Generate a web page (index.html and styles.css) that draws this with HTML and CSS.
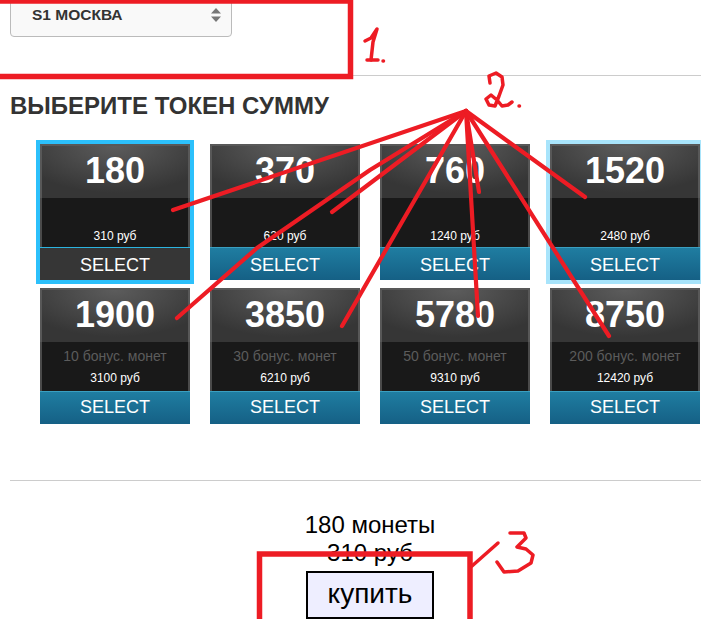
FILE: index.html
```html
<!DOCTYPE html>
<html lang="ru">
<head>
<meta charset="utf-8">
<title>Выберите токен сумму</title>
<link rel="stylesheet" href="styles.css">
</head>
<body>
<main class="page">
  <div class="server">
    <select class="server-select"><option>S1 МОСКВА</option></select>
    <svg class="server-arrows" width="10" height="14" viewBox="0 0 10 14"><path d="M5 0 10 5.500H0Z M0 8.500H10L5 14Z"/></svg>
  </div>
  <hr class="rule rule-top">
  <h2 class="title">ВЫБЕРИТЕ ТОКЕН СУММУ</h2>
  <div class="tokens">
    <article class="token token-plain token-active">
      <div class="token-amount">180</div>
      <div class="token-info"><div class="token-bonus"></div><div class="token-price">310 руб</div></div>
      <div class="token-select">SELECT</div>
    </article>
    <article class="token token-plain">
      <div class="token-amount">370</div>
      <div class="token-info"><div class="token-bonus"></div><div class="token-price">620 руб</div></div>
      <div class="token-select">SELECT</div>
    </article>
    <article class="token token-plain">
      <div class="token-amount">760</div>
      <div class="token-info"><div class="token-bonus"></div><div class="token-price">1240 руб</div></div>
      <div class="token-select">SELECT</div>
    </article>
    <article class="token token-plain token-hover">
      <div class="token-amount">1520</div>
      <div class="token-info"><div class="token-bonus"></div><div class="token-price">2480 руб</div></div>
      <div class="token-select">SELECT</div>
    </article>
    <article class="token">
      <div class="token-amount">1900</div>
      <div class="token-info"><div class="token-bonus">10 бонус. монет</div><div class="token-price">3100 руб</div></div>
      <div class="token-select">SELECT</div>
    </article>
    <article class="token">
      <div class="token-amount">3850</div>
      <div class="token-info"><div class="token-bonus">30 бонус. монет</div><div class="token-price">6210 руб</div></div>
      <div class="token-select">SELECT</div>
    </article>
    <article class="token">
      <div class="token-amount">5780</div>
      <div class="token-info"><div class="token-bonus">50 бонус. монет</div><div class="token-price">9310 руб</div></div>
      <div class="token-select">SELECT</div>
    </article>
    <article class="token">
      <div class="token-amount">8750</div>
      <div class="token-info"><div class="token-bonus">200 бонус. монет</div><div class="token-price">12420 руб</div></div>
      <div class="token-select">SELECT</div>
    </article>
  </div>
  <hr class="rule rule-bottom">
  <div class="summary">
    <div class="summary-line">180 монеты</div>
    <div class="summary-line">310 руб</div>
    <button class="buy">купить</button>
  </div>
</main>
<svg class="marks" width="701" height="619" viewBox="0 0 701 619" aria-hidden="true">
  <g class="marks-box">
    <path d="M-5 1H350.500V76.500H-5"/>
    <path d="M259.500 625V554H470V625"/>
  </g>
  <g class="marks-rays">
    <path d="M466 111 173 210"/>
    <path d="M466 111 332 212"/>
    <path d="M466 111 479 192"/>
    <path d="M466 111 585 197"/>
    <path d="M466 111 370 170 257 248 177 318"/>
    <path d="M466 111 342 326"/>
    <path d="M466 111 478 316"/>
    <path d="M466 111 609 336"/>
  </g>
  <g class="marks-hand">
    <path d="M365 41 371 38 377 29 373 42 371 60"/>
    <path d="M367 60H378"/>
    <path d="M383 61H383.500"/>
    <path d="M490 83 489 76 496 73 502 77 503 85 499 96 495 106 489 105 486 99 491 95 497 100 502 106 508 105 512 102"/>
    <path d="M519 106H519.500"/>
    <path d="M472 566 498 543"/>
    <path d="M510 533H524L526 538 517 547 526 549 533 555 531 563 518 571 504 572 497 562"/>
  </g>
</svg>
</body>
</html>
```

FILE: styles.css
```css
html, body {
  margin: 0;
  height: 619px;
  overflow: hidden;
  background: #fff;
}

body {
  position: relative;
  font-family: "Liberation Sans", Arial, sans-serif;
  color: #333;
}

.page {
  padding-left: 10px;
  margin-top: -7px;
}

.server {
  position: relative;
  width: 222px;
  height: 44px;
}

.server-select {
  display: block;
  width: 100%;
  height: 100%;
  box-sizing: border-box;
  appearance: none;
  border: 1px solid #bbb;
  border-radius: 4px;
  background: #f9f9f9;
  padding: 0 0 2px 21px;
  font: bold 15.500px "Liberation Sans", Arial, sans-serif;
  color: #333;
}

.server-arrows {
  position: absolute;
  right: 11px;
  top: 15px;
  fill: #777;
}

.rule {
  border: 0;
  border-top: 1px solid #ccc;
  margin: 0;
}

.rule-top {
  margin-top: 38px;
}

.title {
  margin: 17px 0 0;
  font-size: 24px;
  line-height: 26px;
  font-weight: bold;
  color: #333;
}

.tokens {
  display: grid;
  grid-template-columns: repeat(4, 150px);
  gap: 8px 20px;
  padding-left: 30px;
  margin-top: 25px;
}

.token {
  display: flex;
  flex-direction: column;
  height: 136px;
  color: #fff;
  text-align: center;
}

.token-active {
  outline: 4px solid #2cc0fb;
}

.token-hover {
  outline: 4px solid #a8e4fb;
}

.token-amount {
  box-sizing: border-box;
  height: 54px;
  border: 2px solid #585858;
  border-bottom: 0;
  background: radial-gradient(ellipse 70% 90% at 50% 0, #5c5c5c, #363636);
  font-size: 36px;
  font-weight: bold;
  line-height: 49px;
}

.token-info {
  box-sizing: border-box;
  height: 49px;
  border: 2px solid #4a4a4a;
  border-width: 0 2px;
  background: #191919;
  padding-top: 4px;
}

.token-bonus {
  height: 20px;
  margin-bottom: 4px;
  font-size: 14px;
  line-height: 20px;
  color: #5c5c5c;
}

.token-plain .token-bonus {
  height: 22px;
}

.token-price {
  font-size: 12px;
  line-height: 16px;
}

.token-select {
  box-sizing: border-box;
  height: 33px;
  border-top: 1px solid #3a9fc0;
  background: linear-gradient(#1f7da1, #156085);
  font-size: 18px;
  line-height: 30px;
}

.token-plain .token-select {
  line-height: 34px;
}

.token-active .token-select {
  border-top-color: #2cb4e0;
  background: #363636;
}

.rule-bottom {
  margin-top: 56px;
}

.summary {
  margin-top: 30px;
  padding-left: 30px;
  width: 660px;
  display: flex;
  flex-direction: column;
  align-items: center;
  color: #000;
}

.summary-line {
  font-size: 24px;
  line-height: 28px;
}

.buy {
  box-sizing: border-box;
  width: 128px;
  height: 48px;
  margin-top: 4px;
  border: 2px solid #000;
  border-radius: 0;
  background: #eef;
  padding: 0 0 3px;
  font: 28px "Liberation Sans", Arial, sans-serif;
  color: #000;
}

.marks {
  position: absolute;
  left: 0;
  top: 0;
  fill: none;
  stroke: #ed1c24;
  pointer-events: none;
}

.marks-box {
  stroke-width: 5.500;
}

.marks-rays {
  stroke-width: 4.200;
  stroke-linecap: round;
  stroke-linejoin: round;
}

.marks-hand {
  stroke-width: 3.500;
  stroke-linecap: round;
  stroke-linejoin: round;
}
```
